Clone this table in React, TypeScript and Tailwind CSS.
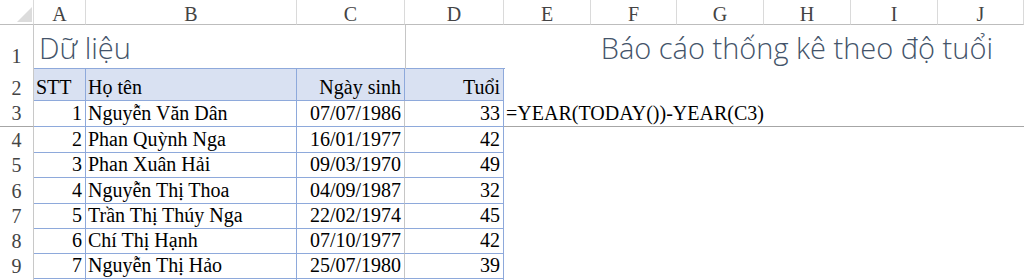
import React from "react";

const serif = { fontFamily: '"Liberation Serif", "Times New Roman", serif' };
const light = { fontFamily: '"Open Sans", "Lato", sans-serif' };

const colLetters: [string, number][] = [
  ["", 34],
  ["A", 52],
  ["B", 211],
  ["C", 108],
  ["D", 99],
  ["E", 87],
  ["F", 86],
  ["G", 87],
  ["H", 87],
  ["I", 87],
  ["J", 86],
];

type Person = { stt: number; name: string; dob: string; age: number };

const people: Person[] = [
  { stt: 1, name: "Nguyễn Văn Dân", dob: "07/07/1986", age: 33 },
  { stt: 2, name: "Phan Quỳnh Nga", dob: "16/01/1977", age: 42 },
  { stt: 3, name: "Phan Xuân Hải", dob: "09/03/1970", age: 49 },
  { stt: 4, name: "Nguyễn Thị Thoa", dob: "04/09/1987", age: 32 },
  { stt: 5, name: "Trần Thị Thúy Nga", dob: "22/02/1974", age: 45 },
  { stt: 6, name: "Chí Thị Hạnh", dob: "07/10/1977", age: 42 },
  { stt: 7, name: "Nguyễn Thị Hảo", dob: "25/07/1980", age: 39 },
  { stt: 0, name: "", dob: "", age: 0 },
];

// row heights for sheet rows 3..10 (including the 1px bottom line)
const dataHeights = ["h-[26px]", "h-[26px]", "h-[25px]", "h-[26px]", "h-[25px]", "h-[25px]", "h-[25px]", "h-[25px]"];

function ColumnHeader() {
  return (
    <div className="flex h-[25px] shrink-0">
      {colLetters.map(([label, w], i) => (
        <div
          key={i}
          style={{ width: w }}
          className="relative flex shrink-0 items-end justify-center border-r border-b border-r-[#dadada] border-b-[#bdbdbd] text-[20px] leading-[20px] text-[#444444]"
        >
          {i === 0 ? (
            <svg className="absolute left-0 top-0" width="33" height="24" viewBox="0 0 33 24">
              <polygon points="17,22 32,22 32,7" fill="#dcdcdc" />
            </svg>
          ) : (
            label
          )}
        </div>
      ))}
    </div>
  );
}

function RowNum({ n, line }: { n?: number; line?: boolean }) {
  return (
    <div
      className={
        "flex w-[34px] shrink-0 items-end justify-center border-r border-r-[#c8c8c8] pb-[3px] text-[20px] leading-[20px] text-[#444444] " +
        (line ? "border-b border-b-[#a6a6a6]" : "")
      }
    >
      {n}
    </div>
  );
}

export default function App() {
  return (
    <div style={serif} className="flex h-[280px] w-[1024px] flex-col overflow-hidden bg-white text-black">
      <ColumnHeader />

      {/* row 1: section titles */}
      <div className="flex h-[44px] shrink-0">
        <RowNum n={1} />
        <div className="flex w-[371px] shrink-0 items-end border-b border-b-[#8ea9db] pb-[3px] pl-[5px]">
          <span style={light} className="whitespace-nowrap text-[29px] font-light leading-[34px] text-[#44546a]">
            Dữ liệu
          </span>
        </div>
        <div className="w-px shrink-0 bg-[#c6c6c6]" />
        <div className="w-[99px] shrink-0 border-b border-b-[#8ea9db]" />
        <div className="flex flex-1 items-end justify-end pb-[4px] pr-[31px]">
          <span style={light} className="whitespace-nowrap text-[29px] font-light leading-[34px] text-[#44546a]">
            Báo cáo thống kê theo độ tuổi
          </span>
        </div>
      </div>

      {/* row 2: table header */}
      <div className="flex h-[32px] shrink-0 text-[20px] leading-[20px]">
        <RowNum n={2} />
        <div className="flex w-[52px] shrink-0 items-end border-r border-b border-[#8ea9db] bg-[#d9e1f2] pb-[3px] pl-[2px]">
          STT
        </div>
        <div className="flex w-[211px] shrink-0 items-end border-r border-b border-[#8ea9db] bg-[#d9e1f2] pb-[3px] pl-[2px]">
          Họ tên
        </div>
        <div className="flex w-[108px] shrink-0 items-end justify-end border-r border-b border-[#8ea9db] bg-[#d9e1f2] pb-[3px] pr-[3px]">
          Ngày sinh
        </div>
        <div className="flex w-[99px] shrink-0 items-end justify-end border-r border-b border-[#8ea9db] bg-[#d9e1f2] pb-[3px] pr-[3px]">
          Tuổi
        </div>
        <div className="flex-1" />
      </div>

      {/* rows 3..10: data */}
      {people.map((p, i) => (
        <div key={i} className={"flex shrink-0 text-[20px] leading-[20px] " + dataHeights[i]}>
          <RowNum n={p.name ? i + 3 : undefined} line={i === 0} />
          <div className="flex w-[52px] shrink-0 items-end justify-end border-r border-b border-[#8ea9db] pb-[3px] pr-[3px]">
            {p.name ? p.stt : ""}
          </div>
          <div className="flex w-[211px] shrink-0 items-end whitespace-nowrap border-r border-b border-[#8ea9db] pb-[3px] pl-[2px]">
            {p.name}
          </div>
          <div className="flex w-[108px] shrink-0 items-end justify-end border-r border-b border-r-[#c6c6c6] border-b-[#8ea9db] pb-[3px] pr-[3px]">
            {p.dob}
          </div>
          <div className="flex w-[99px] shrink-0 items-end justify-end border-r border-b border-[#8ea9db] pb-[3px] pr-[3px]">
            {p.name ? p.age : ""}
          </div>
          {i === 0 ? (
            <div className="flex flex-1 items-end whitespace-nowrap border-b border-b-[#a6a6a6] pb-[3px] pl-[2px]">
              =YEAR(TODAY())-YEAR(C3)
            </div>
          ) : (
            <div className="flex-1" />
          )}
        </div>
      ))}
    </div>
  );
}
